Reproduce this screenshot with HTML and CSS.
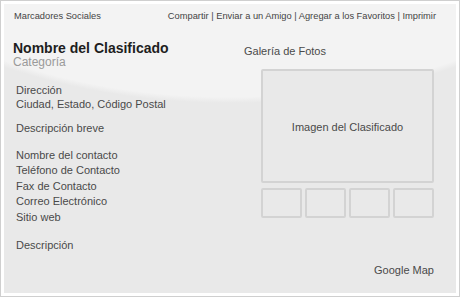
FILE: index.html
```html
<!DOCTYPE html>
<html lang="es">
<head>
  <meta charset="UTF-8">
  <meta name="viewport" content="width=device-width, initial-scale=1">
  <title>Clasificado - Plantilla</title>
  <link rel="stylesheet" href="styles.css">
</head>
<body>
  <div class="frame">
    <div class="panel">
      <div class="topbar">
        <span>Marcadores Sociales</span>
        <span>Compartir | Enviar a un Amigo | Agregar a los Favoritos | Imprimir</span>
      </div>

      <div class="content">
        <div class="info">
          <h1>Nombre del Clasificado</h1>
          <div class="category">Categoría</div>

          <div class="block address">
            <p>Dirección</p>
            <p>Ciudad, Estado, Código Postal</p>
          </div>

          <div class="block short">
            <p>Descripción breve</p>
          </div>

          <div class="block contact">
            <p>Nombre del contacto</p>
            <p>Teléfono de Contacto</p>
            <p>Fax de Contacto</p>
            <p>Correo Electrónico</p>
            <p>Sitio web</p>
          </div>

          <div class="block desc">
            <p>Descripción</p>
          </div>
        </div>

        <div class="gallery">
          <div class="gallery-title">Galería de Fotos</div>
          <div class="main-image">Imagen del Clasificado</div>
          <div class="thumbs">
            <div class="thumb"></div>
            <div class="thumb"></div>
            <div class="thumb"></div>
            <div class="thumb"></div>
          </div>
          <div class="map">Google Map</div>
        </div>
      </div>
    </div>
  </div>
</body>
</html>
```

FILE: styles.css
```css
* {
  box-sizing: border-box;
}
body {
  margin: 0;
  font-family: "Liberation Sans", Arial, sans-serif;
  color: #4a4a4a;
  background: #fff;
}
.frame {
  width: 460px;
  height: 297px;
  border: 1px solid #cfcfcf;
  padding: 3px;
  background: #fff;
}
.panel {
  height: 100%;
  background: radial-gradient(475px 299px at 226px -200px, #f3f3f3 98%, #e9e9e9 100%);
}
.topbar {
  display: flex;
  justify-content: space-between;
  padding: 6px 20px 0 10px;
  font-size: 9.3px;
  line-height: 12px;
  color: #444;
}
.content {
  display: flex;
  justify-content: space-between;
  padding: 0 22px 0 9px;
  margin-top: 19px;
}
.info {
  flex: 1;
}
h1 {
  margin: 0;
  font-size: 14px;
  line-height: 15px;
  color: #1e1e1e;
}
.category {
  font-size: 12px;
  line-height: 12px;
  color: #9a9a9a;
}
.block {
  padding-left: 3px;
  font-size: 11px;
  line-height: 15.5px;
}
.block p {
  margin: 0;
}
.address {
  margin-top: 15px;
  line-height: 14px;
}
.short {
  margin-top: 9.5px;
}
.contact {
  margin-top: 11.5px;
}
.desc {
  margin-top: 13px;
}
.gallery {
  width: 190px;
  padding-top: 3px;
  font-size: 11px;
  line-height: 15.5px;
}
.gallery-title {
  color: #4a4a4a;
}
.main-image {
  display: flex;
  align-items: center;
  justify-content: center;
  height: 114px;
  margin: 9px 0 0 17px;
  padding-top: 4px;
  border: 2px solid #d3d3d3;
  border-radius: 2px;
  background: #e9e9e9;
}
.thumbs {
  display: grid;
  grid-template-columns: repeat(4, 1fr);
  gap: 3px;
  margin: 5px 0 0 17px;
}
.thumb {
  height: 30px;
  border: 2px solid #d3d3d3;
  border-radius: 2px;
  background: #e9e9e9;
}
.map {
  margin-top: 45px;
  text-align: right;
}
```
